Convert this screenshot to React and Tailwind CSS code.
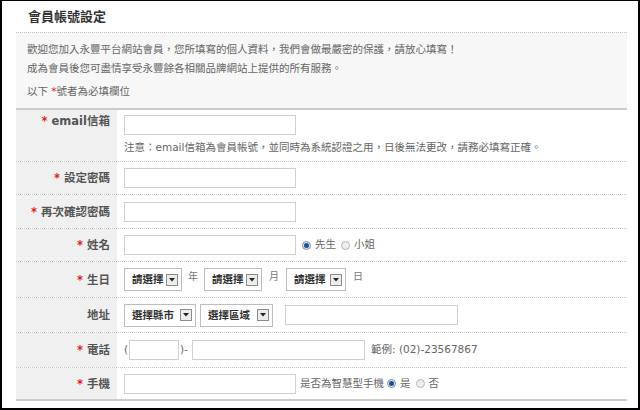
import React from "react";

const F = { fontFamily: '"DejaVu Sans", "Noto Sans CJK TC", sans-serif' };

function Star() {
  return <span className="text-[#e02020] mr-[4px]">*</span>;
}

function Label({ children, star = true, className = "" }) {
  return (
    <div className={"w-[101px] shrink-0 bg-[#f0f0f0] flex justify-end pr-[7px] text-[11.5px] font-bold text-[#555] " + className}>
      <span className="leading-[20px]">
        {star && <Star />}
        {children}
      </span>
    </div>
  );
}

function Input({ w = "w-[172px]" }) {
  return <div className={"h-[20px] border border-[#cfcfcf] bg-white " + w} />;
}

function Select({ text, w }) {
  return (
    <div className={"h-[23px] border border-[#bdbdbd] bg-white flex items-center justify-between pl-[7px] pr-[3px] " + w}>
      <span className="text-[10.5px] font-bold text-[#333] leading-none">{text}</span>
      <span className="w-[12px] h-[12px] border border-[#8c8c8c] bg-[#ececec] flex items-center justify-center">
        <svg width="6" height="4" viewBox="0 0 6 4"><path d="M0 0H6L3 3.5Z" fill="#222" /></svg>
      </span>
    </div>
  );
}

function Radio({ on, className = "" }) {
  return on ? (
    <span className={"w-[9px] h-[9px] shrink-0 rounded-full border border-[#7d8fa6] bg-[#dfe9f5] flex items-center justify-center " + className}>
      <span className="block w-[5px] h-[5px] rounded-full bg-[#1d4f8c]" />
    </span>
  ) : (
    <span className={"block w-[9px] h-[9px] shrink-0 rounded-full border border-[#b5b5b5] bg-[#eeeeee] " + className} />
  );
}

function Row({ h, children, last }) {
  return (
    <div className={"flex " + h + " " + (last ? "" : "border-b border-dotted border-[#c4c4c4]")}>{children}</div>
  );
}

export default function App() {
  return (
    <div style={F} className="w-[640px] h-[410px] bg-white border-t border-l-2 border-r-2 border-b-2 border-black overflow-hidden">
      <div className="h-[31px] pl-[26px] flex items-center">
        <span className="text-[13px] font-bold text-[#333] leading-none">會員帳號設定</span>
      </div>
      <div className="ml-[14px] mr-[11px]">
        <div className="border-t border-dotted border-[#c4c4c4] bg-[#f7f7f7] pl-[11px] pt-[7px] pb-[7px] text-[10.5px] text-[#666] leading-[19px]">
          <div>歡迎您加入永豐平台網站會員，您所填寫的個人資料，我們會做最嚴密的保護，請放心填寫！</div>
          <div>成為會員後您可盡情享受永豐餘各相關品牌網站上提供的所有服務。</div>
          <div className="mt-[4px]">以下 <span className="text-[#e02020]">*</span>號者為必填欄位</div>
        </div>
        <div className="h-[2px] bg-[#cccccc]" />

        <Row h="h-[52px]">
          <Label className="pt-[1px]">email信箱</Label>
          <div className="flex flex-col pl-[7px] pt-[5px]">
            <Input />
            <div className="mt-[3px] text-[10.5px] text-[#666] leading-[19px]">注意：email信箱為會員帳號，並同時為系統認證之用，日後無法更改，請務必填寫正確。</div>
          </div>
        </Row>

        <Row h="h-[33px]">
          <Label className="items-center">設定密碼</Label>
          <div className="flex items-center pl-[7px]"><Input /></div>
        </Row>

        <Row h="h-[34px]">
          <Label className="items-center">再次確認密碼</Label>
          <div className="flex items-center pl-[7px]"><Input /></div>
        </Row>

        <Row h="h-[33px]">
          <Label className="items-center">姓名</Label>
          <div className="flex items-center pl-[7px] text-[10.5px] text-[#666]">
            <Input />
            <Radio on className="ml-[6px]" />
            <span className="ml-[4px]">先生</span>
            <Radio className="ml-[5px]" />
            <span className="ml-[4px]">小姐</span>
          </div>
        </Row>

        <Row h="h-[36px]">
          <Label className="items-center">生日</Label>
          <div className="flex items-center pl-[7px] text-[10px] text-[#777]">
            <Select text="請選擇" w="w-[58px]" />
            <span className="mx-[6px] -mt-[6px]">年</span>
            <Select text="請選擇" w="w-[58px]" />
            <span className="mx-[7px] -mt-[6px]">月</span>
            <Select text="請選擇" w="w-[60px]" />
            <span className="mx-[7px] -mt-[6px]">日</span>
          </div>
        </Row>

        <Row h="h-[35px]">
          <Label star={false} className="items-center">地址</Label>
          <div className="flex items-center pl-[7px]">
            <Select text="選擇縣市" w="w-[72px]" />
            <span className="ml-[4px]"><Select text="選擇區域" w="w-[73px]" /></span>
            <span className="ml-[12px]"><Input w="w-[173px]" /></span>
          </div>
        </Row>

        <Row h="h-[35px]">
          <Label className="items-center">電話</Label>
          <div className="flex items-center pl-[7px] text-[10.5px] text-[#666]">
            <span className="mr-[1px]">(</span>
            <Input w="w-[50px]" />
            <span className="ml-[1px] mr-[4px]">)-</span>
            <Input w="w-[173px]" />
            <span className="ml-[6px]">範例: (02)-23567867</span>
          </div>
        </Row>

        <Row h="h-[31px]" last>
          <Label className="items-center">手機</Label>
          <div className="flex items-center pl-[7px] text-[10.5px] text-[#666]">
            <Input />
            <span className="ml-[4px]">是否為智慧型手機</span>
            <Radio on className="ml-[3px]" />
            <span className="ml-[4px]">是</span>
            <Radio className="ml-[5px]" />
            <span className="ml-[4px]">否</span>
          </div>
        </Row>
        <div className="h-[2px] bg-[#cccccc]" />
      </div>
    </div>
  );
}
